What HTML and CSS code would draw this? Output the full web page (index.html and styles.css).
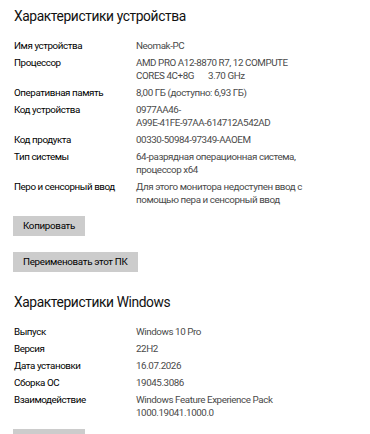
FILE: index.html
```html
<!DOCTYPE html>
<html lang="ru">
<head>
<meta charset="utf-8">
<link rel="stylesheet" href="styles.css">
</head>
<body>
<main class="page">
  <h2 class="title">Характеристики устройства</h2>
  <dl class="specs">
    <dt>Имя устройства</dt><dd>Neomak-PC</dd>
    <dt>Процессор</dt><dd>AMD PRO A12-8870 R7, 12 COMPUTE<br>CORES 4C+8G&nbsp;&nbsp;&nbsp;&nbsp;&nbsp;&nbsp; 3.70 GHz</dd>
    <dt>Оперативная память</dt><dd>8,00 ГБ (доступно: 6,93 ГБ)</dd>
    <dt>Код устройства</dt><dd>0977AA46-<br>A99E-41FE-97AA-614712A542AD</dd>
    <dt>Код продукта</dt><dd>00330-50984-97349-AAOEM</dd>
    <dt>Тип системы</dt><dd>64-разрядная операционная система,<br>процессор x64</dd>
    <dt>Перо и сенсорный ввод</dt><dd>Для этого монитора недоступен ввод с<br>помощью пера и сенсорный ввод</dd>
  </dl>
  <button class="btn btn-first" type="button">Копировать</button>
  <button class="btn" type="button">Переименовать этот ПК</button>

  <h2 class="title title-second">Характеристики Windows</h2>
  <dl class="specs">
    <dt>Выпуск</dt><dd>Windows 10 Pro</dd>
    <dt>Версия</dt><dd>22H2</dd>
    <dt>Дата установки</dt><dd>16.07.2026</dd>
    <dt>Сборка ОС</dt><dd>19045.3086</dd>
    <dt>Взаимодействие</dt><dd>Windows Feature Experience Pack<br>1000.19041.1000.0</dd>
  </dl>
  <button class="btn btn-first" type="button">Копировать</button>
</main>
</body>
</html>
```

FILE: styles.css
```css
html, body {
  margin: 0;
  padding: 0;
  background: #ffffff;
}

body {
  font-family: Roboto, "Noto Sans", sans-serif;
  color: #000000;
  overflow: hidden;
}

.page {
  display: flex;
  flex-direction: column;
  align-items: flex-start;
  padding: 6px 0 0 14px;
}

.title {
  margin: 0;
  font-size: 13.8px;
  line-height: 20px;
  font-weight: 400;
  letter-spacing: -0.4px;
  color: #111111;
}

.title-second {
  margin-top: 20px;
}

.specs {
  display: grid;
  grid-template-columns: 122px auto;
  row-gap: 4px;
  margin: 13px 0 0 0;
  font-size: 9.8px;
  line-height: 13px;
  letter-spacing: -0.42px;
}

.specs dt {
  margin: 0;
  color: #000000;
}

.specs dd {
  margin: 0;
  color: #4a4a4a;
  white-space: nowrap;
}

.btn {
  font-family: inherit;
  font-size: 9.8px;
  letter-spacing: -0.3px;
  height: 20px;
  padding: 0 10px;
  margin: 16px 0 0 -1px;
  border: none;
  background: #cccccc;
  color: #000000;
  line-height: 20px;
}

.btn-first {
  margin-top: 10px;
}
```
